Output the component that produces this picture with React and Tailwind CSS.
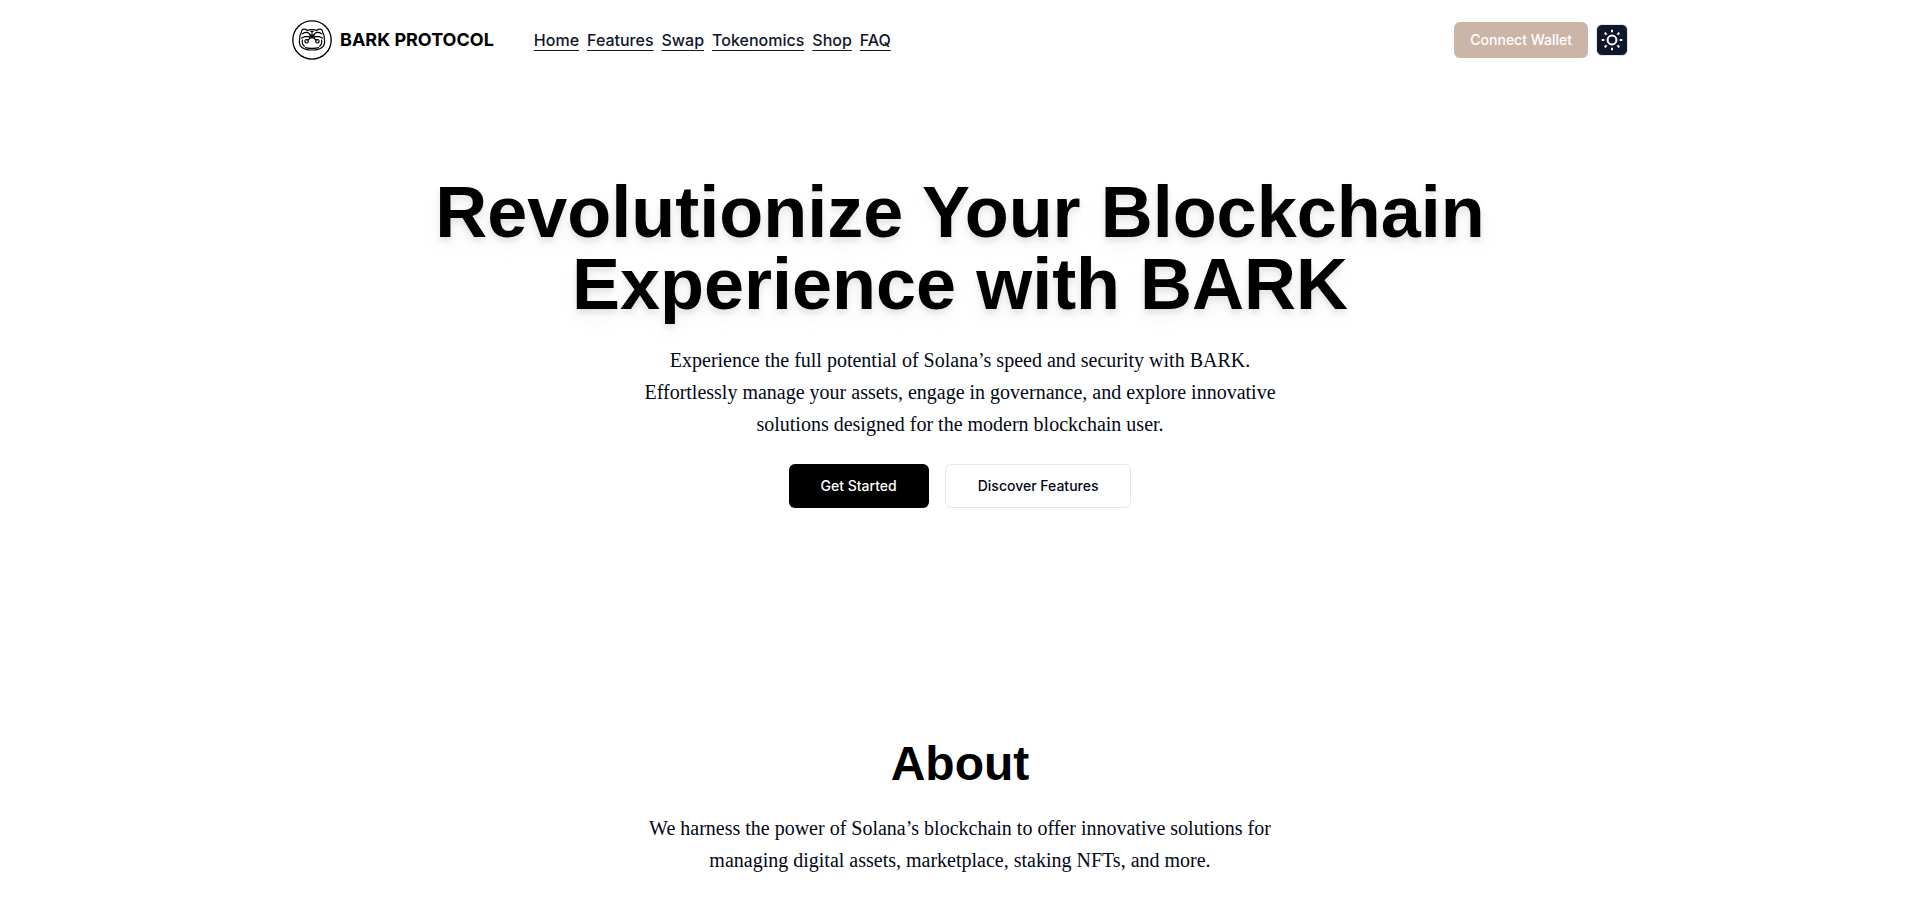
const NAV_LINKS = ["Home", "Features", "Swap", "Tokenomics", "Shop", "FAQ"];

function Logo() {
  return (
    <svg viewBox="0 0 40 40" className="size-10" fill="none" stroke="#000" aria-hidden="true">
      <circle cx="20" cy="20" r="19.2" strokeWidth="1.3" />
      <g strokeWidth="1.2" strokeLinecap="round" strokeLinejoin="round">
        <path d="M15.500 10.500c-1.500-1-4.200-1.600-5.200-.8-.9.800-.8 2.800-1.600 4.200-.9 1.600-1.500 2.600-.9 4.200-.6 2.800-.5 6 .8 8 1.400 2 3.600 3.900 11.400 3.900s10-1.900 11.400-3.900c1.300-2 1.400-5.200.8-8 .6-1.600 0-2.600-.9-4.200-.8-1.400-.7-3.400-1.600-4.200-1-.8-3.700-.2-5.200.8" />
        <path d="M15.500 10.500c1.500-1.300 7.500-1.300 9 0" />
        <path d="M10.500 13.800c2.200-1.600 4-1.800 6-.8l1.500 1.600M29.500 13.800c-2.200-1.600-4-1.800-6-.8l-1.500 1.600" />
        <path d="M9.500 18.200l3.200-1.700 4 .2 1.500 1M30.500 18.200l-3.200-1.700-4 .2-1.500 1" />
        <path d="M18.500 17.800l-2.500 2.200M21.500 17.800l2.500 2.200" />
        <path d="M10.400 20c-.4 2.600.2 5 2.100 6.200M29.600 20c.4 2.600-.2 5-2.100 6.200" />
        <path d="M13.500 27.600c2 .9 11 .9 13 0" />
        <circle cx="14.600" cy="21.300" r="1.700" />
        <circle cx="25.400" cy="21.300" r="1.700" />
      </g>
      <path d="M17.800 14.800h4.400v1.600L20 18.400l-2.200-2z" fill="#000" strokeWidth="0.8" />
      <path d="M18.200 11.600h3.600M20 11.600v3" strokeWidth="1" />
    </svg>
  );
}

function SunIcon() {
  return (
    <svg viewBox="0 0 24 24" className="size-6" fill="none" stroke="#fff" strokeWidth="2" aria-hidden="true">
      <circle cx="12" cy="12" r="4.400" />
      <path d="M12 1.700v2.600M12 19.700v2.600M1.700 12h2.600M19.700 12h2.600M4.700 4.700l1.900 1.900M17.400 17.400l1.900 1.900M4.700 19.300l1.900-1.900M17.400 6.600l1.900-1.900" />
    </svg>
  );
}

function Header() {
  return (
    <header className="mx-auto flex h-20 w-full max-w-[1400px] items-center justify-between px-8">
      <div className="flex items-center gap-10">
        <a href="#home" className="flex items-center gap-2">
          <Logo />
          <span className="text-lg font-bold text-black">BARK PROTOCOL</span>
        </a>
        <nav aria-label="Main" className="flex gap-2">
          {NAV_LINKS.map((label) => (
            <a
              key={label}
              href={"#" + label.toLowerCase()}
              className="text-base font-medium text-slate-900 underline decoration-1 underline-offset-4"
            >
              {label}
            </a>
          ))}
        </nav>
      </div>
      <div className="flex items-center gap-2">
        <button type="button" className="h-9 rounded-md bg-[#cbb5a7] px-4 text-sm font-medium text-white">
          Connect Wallet
        </button>
        <button
          type="button"
          aria-label="Toggle theme"
          className="flex size-8 items-center justify-center rounded-md border border-slate-200 bg-slate-900"
        >
          <SunIcon />
        </button>
      </div>
    </header>
  );
}

function Hero() {
  return (
    <section id="home" className="flex flex-col items-center px-8 pt-24 pb-24 text-center">
      <h1 className="max-w-6xl font-['Liberation_Sans',Arial,sans-serif] text-7xl leading-none font-bold text-black [filter:drop-shadow(0_10px_8px_rgb(0_0_0/0.04))_drop-shadow(0_4px_3px_rgb(0_0_0/0.1))]">
        Revolutionize Your Blockchain Experience with BARK
      </h1>
      <p className="mt-6 max-w-2xl font-['Liberation_Serif','Times_New_Roman',serif] text-xl leading-8">
        Experience the full potential of Solana’s speed and security with BARK. Effortlessly manage your assets,
        engage in governance, and explore innovative solutions designed for the modern blockchain user.
      </p>
      <div className="mt-6 flex gap-4">
        <button type="button" className="h-11 rounded-md bg-black px-8 text-sm font-medium text-white">
          Get Started
        </button>
        <button type="button" className="h-11 rounded-md border border-slate-200 bg-white px-8 text-sm font-medium">
          Discover Features
        </button>
      </div>
    </section>
  );
}

function About() {
  return (
    <section id="about" className="flex flex-col items-center px-8 pt-34 text-center">
      <h2 className="font-['Liberation_Sans',Arial,sans-serif] text-5xl leading-none font-bold text-black">About</h2>
      <p className="mt-6 max-w-2xl font-['Liberation_Serif','Times_New_Roman',serif] text-xl leading-8">
        We harness the power of Solana’s blockchain to offer innovative solutions for managing digital assets,
        marketplace, staking NFTs, and more.
      </p>
    </section>
  );
}

export default function App() {
  return (
    <div className="bg-white font-[Inter,sans-serif] text-[#020817]">
      <Header />
      <main>
        <Hero />
        <About />
      </main>
    </div>
  );
}
